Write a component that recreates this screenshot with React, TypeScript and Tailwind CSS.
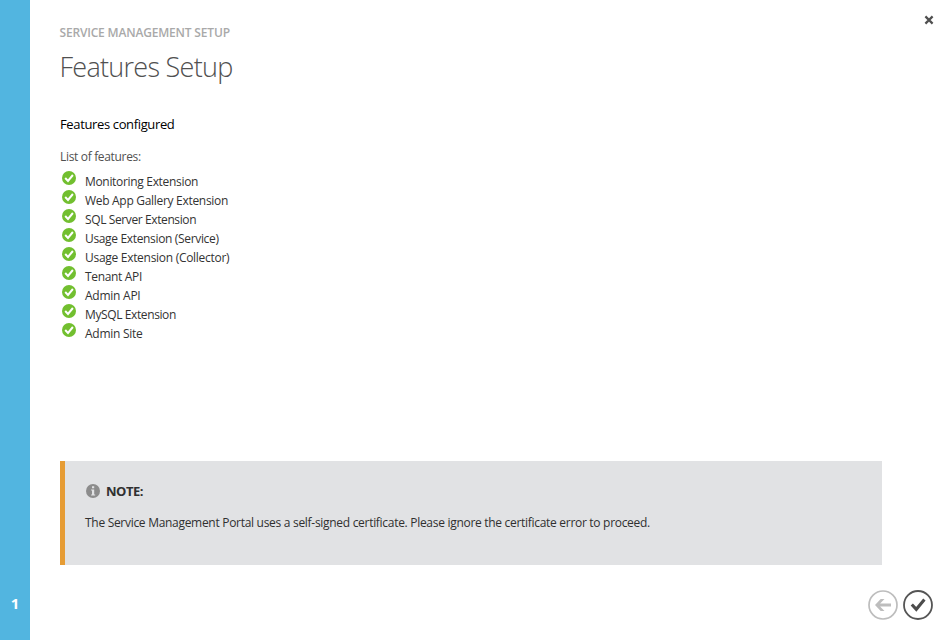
import React from "react";

const features: { name: string; tracking: string }[] = [
  { name: "Monitoring Extension", tracking: "tracking-[-0.32px]" },
  { name: "Web App Gallery Extension", tracking: "tracking-[-0.3px]" },
  { name: "SQL Server Extension", tracking: "tracking-[-0.39px]" },
  { name: "Usage Extension (Service)", tracking: "tracking-[-0.34px]" },
  { name: "Usage Extension (Collector)", tracking: "tracking-[-0.29px]" },
  { name: "Tenant API", tracking: "tracking-[-0.33px]" },
  { name: "Admin API", tracking: "tracking-[-0.25px]" },
  { name: "MySQL Extension", tracking: "tracking-[-0.39px]" },
  { name: "Admin Site", tracking: "tracking-[-0.26px]" },
];

function CheckBadge() {
  return (
    <svg className="ml-0.5 h-[14px] w-[14px] shrink-0" viewBox="0 0 14 14">
      <circle cx="7" cy="7" r="7" fill="#72bf2f" />
      <path d="M3.2 7 6 9.9 10.9 4" fill="none" stroke="#fff" strokeWidth="2" />
    </svg>
  );
}

function InfoIcon() {
  return (
    <svg className="ml-px h-[14px] w-[14px] shrink-0" viewBox="0 0 14 14">
      <circle cx="7" cy="7" r="7" fill="#8c8c8c" />
      <path d="M6 2.2h2.2v2H6zM5.1 5.4h3.1v5h1v1.2H5.1v-1.2H6V6.6h-.9z" fill="#e1e2e4" />
    </svg>
  );
}

export default function App() {
  return (
    <div className="flex h-[640px] w-[948px] overflow-hidden bg-white font-['Open_Sans','Noto_Sans',sans-serif]">
      <aside className="flex w-[30px] shrink-0 flex-col justify-end bg-[#52b5e0] pb-[27px] text-center text-[15px] leading-5 font-bold text-white">
        1
      </aside>
      <main className="flex flex-1 flex-col">
        <header className="flex h-[110px] justify-between pr-[15px] pl-[30px]">
          <div className="pt-[23px] whitespace-nowrap">
            <div className="-ml-[0.5px] text-[12px] leading-5 font-semibold tracking-[-0.18px] text-[#a9a9a9]">SERVICE MANAGEMENT SETUP</div>
            <h1 className="-ml-[0.5px] mt-1 text-[27px] leading-10 font-light tracking-[-0.73px] text-[#505050]">Features Setup</h1>
          </div>
          <button aria-label="Close" className="mt-4 h-2 w-2">
            <svg className="block h-2 w-2 overflow-visible" viewBox="0 0 8 8">
              <path d="M.4.4 7.6 7.6M7.6.4.4 7.6" stroke="#505050" strokeWidth="2.2" />
            </svg>
          </button>
        </header>
        <section className="h-[351px] pl-[30px] whitespace-nowrap">
          <h2 className="pt-1 text-[13px] leading-5 tracking-[-0.36px] text-black">Features configured</h2>
          <p className="mt-[13px] text-[12px] leading-5 tracking-[-0.33px] text-[#505050]">List of features:</p>
          <ul className="mt-1">
            {features.map((f) => (
              <li key={f.name} className="flex h-[19px] items-start">
                <CheckBadge />
                <span className={"ml-[9px] pt-px text-[12px] leading-5 text-[#333] " + f.tracking}>{f.name}</span>
              </li>
            ))}
          </ul>
        </section>
        <section className="ml-[30px] h-[104px] w-[822px] border-l-[5px] border-[#e69c34] bg-[#e1e2e4] pt-5 pl-5 whitespace-nowrap text-[#303030]">
          <div className="flex h-5 items-center">
            <InfoIcon />
            <strong className="ml-1.5 text-[13px] leading-5 font-bold tracking-[-0.5px]">NOTE:</strong>
          </div>
          <p className="mt-3 text-[12px] leading-5 tracking-[-0.295px]">
            The Service Management Portal uses a self-signed certificate. Please ignore the certificate error to proceed.
          </p>
        </section>
        <footer className="flex flex-1 justify-end gap-[5px] pt-[25px] pr-[15px]">
          <button aria-label="Back" className="h-[30px] w-[30px]">
            <svg className="block h-[30px] w-[30px]" viewBox="0 0 30 30">
              <circle cx="15" cy="15" r="14" fill="none" stroke="#bdbdbd" strokeWidth="1.7" />
              <path d="M7 15 12.7 9h3.8l-4.4 4.6H23v2.8H12.1l4.4 4.6h-3.8z" fill="#bdbdbd" />
            </svg>
          </button>
          <button aria-label="Complete" className="h-[30px] w-[30px]">
            <svg className="block h-[30px] w-[30px]" viewBox="0 0 30 30">
              <circle cx="15" cy="15" r="14" fill="none" stroke="#555" strokeWidth="1.8" />
              <path d="M8.8 14.5 13.3 19.3 21.4 9.6" fill="none" stroke="#4c4c4c" strokeWidth="3.1" />
            </svg>
          </button>
        </footer>
      </main>
    </div>
  );
}
